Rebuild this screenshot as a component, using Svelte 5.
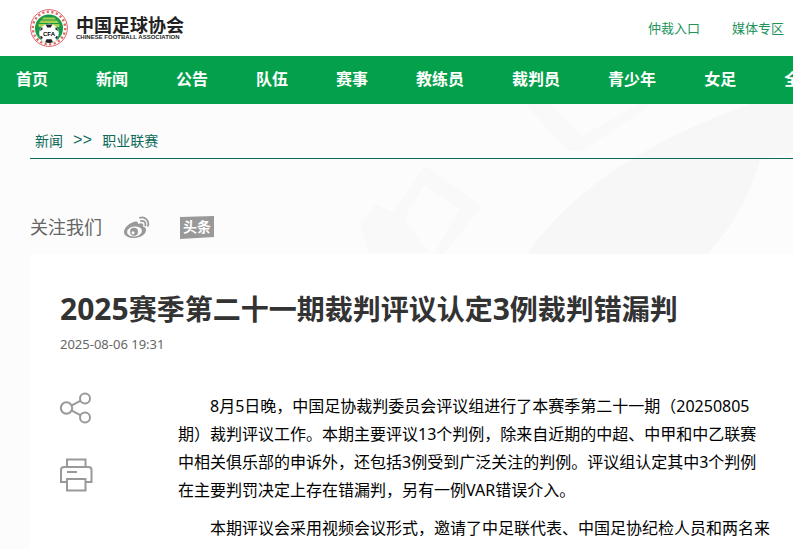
<script lang="ts">
	const topLinks = ['仲裁入口', '媒体专区'];
	const navItems = ['首页', '新闻', '公告', '队伍', '赛事', '教练员', '裁判员', '青少年', '女足', '全'];
	const paragraphs = [
		'8月5日晚，中国足协裁判委员会评议组进行了本赛季第二十一期（20250805期）裁判评议工作。本期主要评议13个判例，除来自近期的中超、中甲和中乙联赛中相关俱乐部的申诉外，还包括3例受到广泛关注的判例。评议组认定其中3个判例在主要判罚决定上存在错漏判，另有一例VAR错误介入。',
		'本期评议会采用视频会议形式，邀请了中足联代表、中国足协纪检人员和两名来'
	];
</script>

<header class="top">
	<a class="logo" href="/">
		<svg class="emblem" viewBox="0 0 40 40" aria-hidden="true">
			<circle cx="20" cy="20" r="18.400" fill="#fff" stroke="#e8606a" stroke-width="1" />
			<circle cx="20" cy="20" r="16.200" fill="none" stroke="#dd6b62" stroke-width="2.400" stroke-dasharray="2.200 2.400" />
			<circle cx="20" cy="20.500" r="14" fill="#18994a" />
			<path d="M12 12.500h16l2 2.500H10zM14.500 9.500h11l1.500 2H13zM9.500 16h21v3h-21z" fill="#a9cf4c" />
			<circle cx="20" cy="25.500" r="9.800" fill="#fff" />
			<path d="M16.500 16.500h7l-1.800 3h-3.400zM10.800 23l2.800-1.500-.3-2.500q-2 1.800-2.500 4zM29.200 23l-2.800-1.500.3-2.500q2 1.800 2.500 4zM16 34.200l1.500-3h5l1.500 3q-4 1.500-8 0zM12 31l2-1-1.500-2-1.500.5zM28 31l-2-1 1.500-2 1.500.5z" fill="#222" />
			<text x="20" y="27.500" text-anchor="middle">CFA</text>
		</svg>
		<span class="wordmark">
			<strong>中国足球协会</strong>
			<small>CHINESE FOOTBALL ASSOCIATION</small>
		</span>
	</a>
	<div class="top-links">
		{#each topLinks as link}
			<a href="/">{link}</a>
		{/each}
	</div>
</header>

<nav>
	{#each navItems as item}
		<a href="/">{item}</a>
	{/each}
</nav>

<main>
	<svg class="watermark" width="793" height="150" viewBox="0 0 793 150" aria-hidden="true">
		<path d="M793 0H750C660 32 575 80 527 150H707Q745 110 760 56L793 48z" fill="#f7f7f7" />
		<path d="M525 0h25l32 32 58-32h12l-70 47h-14zM360 120l15-20 18 8 32-46 57 40-38 48h-10l25-45-35-24-20 34 25 33h-60z" fill="#f9f9f9" />
	</svg>

	<div class="crumbs">
		<a href="/">新闻</a>
		<span>&gt;&gt;</span>
		<a href="/">职业联赛</a>
	</div>

	<div class="follow">
		<span>关注我们</span>
		<a href="/" aria-label="微博">
			<svg width="26" height="24" viewBox="0 0 26 24" fill="none">
				<path d="M10 6C5 7 0 12 0 16c0 4 5 6 10 6 7 0 12-4 12-8 0-2-1-3-3-3.500 1-3-1-4-5-2.500C14.500 6 13 5 10 6z" fill="#999" />
				<ellipse cx="10.500" cy="15.500" rx="7.500" ry="5" fill="#fcfcfc" transform="rotate(-8 10.500 15.500)" />
				<circle cx="10" cy="15.800" r="4" fill="#999" />
				<circle cx="9" cy="16.800" r="1.500" fill="#fcfcfc" />
				<path d="M16 1.800c5-1.500 9.500 3 8 8M17 5c3-.5 5 1.500 4.300 4.300" stroke="#999" stroke-width="1.800" stroke-linecap="round" />
			</svg>
		</a>
		<a class="toutiao" href="/">
			<svg width="34" height="23" viewBox="0 0 34 23" aria-hidden="true">
				<path d="M0 1L34 0v21L0 23z" fill="#999" />
			</svg>
			<b>头条</b>
		</a>
	</div>

	<article>
		<h1><span class="num">2025</span>赛季第二十一期裁判评议认定<span class="num">3</span>例裁判错漏判</h1>
		<time datetime="2025-08-06T19:31">2025-08-06 19:31</time>

		<div class="body">
			<div class="tools">
				<button aria-label="分享">
					<svg width="32" height="32" viewBox="0 0 32 32">
						<circle cx="6.500" cy="16" r="5.700" />
						<circle cx="25" cy="6.500" r="5" />
						<circle cx="25" cy="25.500" r="5" />
						<path d="M11.800 13.400l8.500-4.500M11.800 18.600l8.500 4.500" />
					</svg>
				</button>
				<button aria-label="打印">
					<svg width="33" height="34" viewBox="0 0 33 34">
						<path d="M7 9V1.500h18.500V9M7 24H1V12q0-3 3-3h24.500q3 0 3 3v12h-6M7 14h10M7 21h18.500v11.500H7z" />
					</svg>
				</button>
			</div>
			<div class="text">
				{#each paragraphs as paragraph}
					<p>{paragraph}</p>
				{/each}
			</div>
		</div>
	</article>
</main>

<style>
	:global(body) {
		margin: 0;
		overflow: hidden;
		background: #fff;
		font-family: 'Noto Sans', 'Noto Sans CJK SC', sans-serif;
	}

	a {
		color: inherit;
		text-decoration: none;
	}

	.top {
		display: flex;
		align-items: center;
		justify-content: space-between;
		height: 56px;
		padding: 0 9px 0 29px;
	}

	.logo {
		display: flex;
		align-items: center;
		gap: 7px;
	}

	.emblem {
		width: 40px;
		height: 40px;
	}

	.emblem text {
		font: bold 6px 'Liberation Sans', sans-serif;
	}

	.wordmark {
		display: flex;
		flex-direction: column;
		color: #222;
		white-space: nowrap;
	}

	.wordmark strong {
		font-size: 18px;
		line-height: 18px;
		font-weight: bold;
	}

	.wordmark small {
		font: bold 6px/6px 'Liberation Sans', sans-serif;
	}

	.top-links {
		display: flex;
		gap: 32px;
		color: #22935a;
		font-size: 13px;
		line-height: 18px;
	}

	nav {
		display: flex;
		gap: 48px;
		height: 48px;
		padding-left: 16px;
		overflow: hidden;
		background: #04a04b;
		color: #fff;
		font-size: 16px;
		font-weight: bold;
		line-height: 46px;
		white-space: nowrap;
	}

	nav a {
		flex: none;
	}

	main {
		position: relative;
		padding-left: 30px;
		background: #fcfcfc;
	}

	.watermark {
		position: absolute;
		top: 0;
		right: 0;
	}

	.crumbs {
		position: relative;
		display: flex;
		gap: 10px;
		padding: 22px 5px 2px;
		border-bottom: 1px solid #0b6a58;
		color: #0b6a58;
		font-size: 14px;
		line-height: 30px;
	}

	.crumbs span {
		font-family: 'Liberation Mono', monospace;
		font-size: 16px;
	}

	.follow {
		position: relative;
		display: flex;
		align-items: center;
		height: 57px;
		padding-top: 38px;
		color: #666;
		font-size: 18px;
	}

	.follow a {
		display: flex;
		margin: 4px 0 0 22px;
	}

	.follow .toutiao {
		position: relative;
		margin-left: 30px;
	}

	.toutiao b {
		position: absolute;
		inset: 0;
		color: #fff;
		font-size: 14px;
		line-height: 22px;
		text-align: center;
	}

	article {
		position: relative;
		min-height: 295px;
		padding: 34px 22px 0 30px;
		box-sizing: border-box;
		background: #fff;
	}

	h1 {
		margin: 0;
		color: #333;
		font-size: 28px;
		line-height: 42px;
	}

	.num {
		font-size: 30px;
	}

	time {
		display: block;
		margin-top: 4px;
		color: #666;
		font-size: 13px;
		line-height: 20px;
	}

	.body {
		display: flex;
		gap: 85px;
		margin-top: 38px;
	}

	.tools {
		display: flex;
		flex: none;
		flex-direction: column;
		gap: 34px;
	}

	.tools button {
		display: flex;
		padding: 0;
		border: 0;
		background: none;
	}

	.tools svg {
		fill: none;
		stroke: #999;
		stroke-width: 2;
	}

	.text {
		color: #000;
		font-size: 16px;
		line-height: 28px;
	}

	p {
		margin: 0 0 10px;
		text-indent: 2em;
	}
</style>
